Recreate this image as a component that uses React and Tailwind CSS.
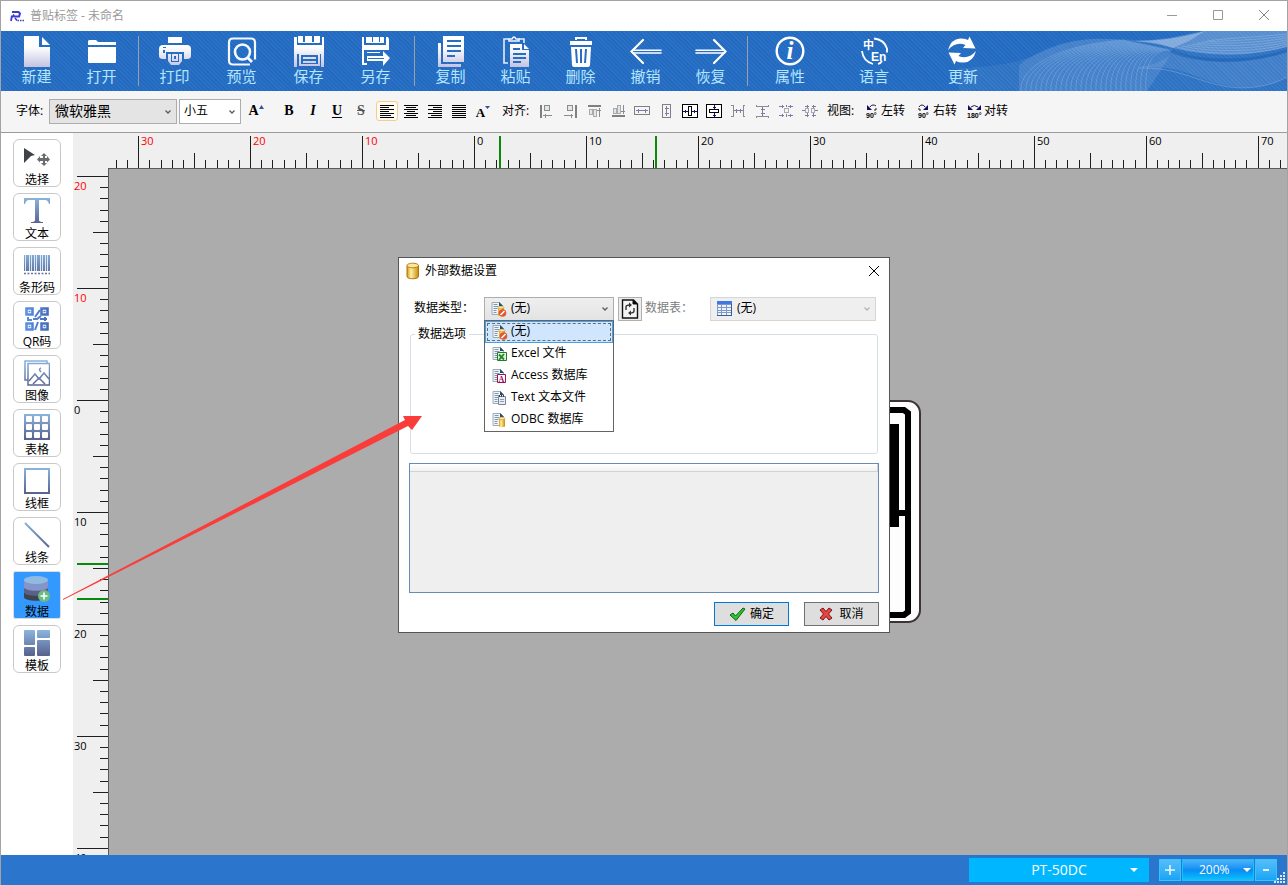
import { useState } from "react";
import clsx from "clsx";

const TICK = 11.195;

const toolGroups = [
  {
    items: [
      { label: "新建", icon: NewIcon, width: "w-[65px]" },
      { label: "打开", icon: OpenIcon, width: "w-[65px]" },
    ],
  },
  {
    divider: "ml-1 mr-0.5",
    items: [
      { label: "打印", icon: PrintIcon, width: "w-[67px]" },
      { label: "预览", icon: PreviewIcon, width: "w-[67px]" },
      { label: "保存", icon: SaveIcon, width: "w-[67px]" },
      { label: "另存", icon: SaveAsIcon, width: "w-[67px]" },
    ],
  },
  {
    divider: "ml-[5px] mr-[3px]",
    items: [
      { label: "复制", icon: CopyIcon, width: "w-[65px]" },
      { label: "粘贴", icon: PasteIcon, width: "w-[65px]" },
      { label: "删除", icon: DeleteIcon, width: "w-[65px]" },
      { label: "撤销", icon: UndoIcon, width: "w-[65px]" },
      { label: "恢复", icon: RedoIcon, width: "w-[65px]" },
    ],
  },
  {
    divider: "ml-1",
    items: [
      { label: "属性", icon: InfoIcon, width: "w-[84px]" },
      { label: "语言", icon: LanguageIcon, width: "w-[84px]" },
      { label: "更新", icon: UpdateIcon, width: "w-[94px]" },
    ],
  },
];

const sideTools = [
  { label: "选择", icon: SelectArt },
  { label: "文本", icon: TextArt },
  { label: "条形码", icon: BarcodeArt },
  { label: "QR码", icon: QrArt },
  { label: "图像", icon: ImageArt },
  { label: "表格", icon: TableArt },
  { label: "线框", icon: FrameArt },
  { label: "线条", icon: LineArt },
  { label: "数据", icon: DataArt },
  { label: "模板", icon: TemplateArt },
];

const dataTypes = [
  { label: "(无)", badge: "none" },
  { label: "Excel 文件", badge: "excel" },
  { label: "Access 数据库", badge: "access" },
  { label: "Text 文本文件", badge: "text" },
  { label: "ODBC 数据库", badge: "odbc" },
];

export default function App() {
  const [activeTool, setActiveTool] = useState("数据");

  return (
    <div className="relative flex h-screen flex-col overflow-hidden border-x border-t border-[#a3a3a3] bg-white font-['Open_Sans','Noto_Sans_CJK_SC',sans-serif] text-xs text-black">
      <Gradients />
      <TitleBar />
      <Toolbar />
      <FormatBar />

      <div className="flex min-h-0 flex-1">
        <nav className="flex w-[72px] shrink-0 flex-col gap-1.5 bg-white pt-1.5 pl-3">
          {sideTools.map(({ label, icon: Icon }) => (
            <button
              key={label}
              onClick={() => setActiveTool(label)}
              className={clsx(
                "flex h-12 w-12 shrink-0 flex-col items-center border bg-clip-padding pt-[3px] leading-4",
                activeTool === label ? "rounded-[2px] border-[#dcdcdc] bg-[#3399ff]" : "rounded-md border-[#c9c9c9] bg-white"
              )}
            >
              <Icon />
              <span className="mt-px h-4 whitespace-nowrap">{label}</span>
            </button>
          ))}
        </nav>

        <div className="flex min-w-0 flex-1 flex-col bg-[#efefef]">
          <TopRuler />
          <div className="flex min-h-0 flex-1">
            <LeftRuler />
            <main className="relative min-w-0 flex-1 overflow-hidden border-t border-l border-[#5a5a5a] bg-[#acacac]">
              <LabelCard />
            </main>
          </div>
        </div>
      </div>

      <StatusBar />

      <div className="pointer-events-none absolute inset-0 flex items-center justify-center pt-1">
        <DataDialog />
      </div>
      <Pointer />
    </div>
  );
}

function Gradients() {
  return (
    <svg className="absolute h-0 w-0" aria-hidden="true">
      <defs>
        <linearGradient id="sheen" gradientUnits="userSpaceOnUse" x1="0" y1="0" x2="0" y2="31">
          <stop offset="0.35" stopColor="#ffffff" />
          <stop offset="1" stopColor="#c3c3e2" />
        </linearGradient>
        <linearGradient id="steel" gradientUnits="userSpaceOnUse" x1="0" y1="0" x2="0" y2="26">
          <stop offset="0" stopColor="#8cb8e2" />
          <stop offset="1" stopColor="#5a6490" />
        </linearGradient>
        <linearGradient id="steelH" gradientUnits="userSpaceOnUse" x1="0" y1="0" x2="26" y2="0">
          <stop offset="0" stopColor="#5b94e6" />
          <stop offset="1" stopColor="#4568b4" />
        </linearGradient>
        <linearGradient id="gold" x1="0" y1="0" x2="1" y2="0">
          <stop offset="0" stopColor="#d99a10" />
          <stop offset="0.35" stopColor="#ffefa6" />
          <stop offset="1" stopColor="#c98a06" />
        </linearGradient>
      </defs>
    </svg>
  );
}

function TitleBar() {
  return (
    <header className="flex h-[30px] shrink-0 items-center bg-white pl-2 text-[#999]">
      <svg width="16" height="14" viewBox="0 0 16 14" fill="none" stroke="#3f3bd0">
        <path d="M3 3h6.500l1.500 1.500-1 3H5" strokeWidth="2" />
        <path d="M5 5.500L4 7.500H2.800L2 12" strokeWidth="1.800" />
        <path d="M6 9l2 2.500" strokeWidth="1.600" />
        <path d="M8.500 11.500h6.500" strokeWidth="1.600" strokeDasharray="1.500 1" />
      </svg>
      <h1 className="ml-[5px] flex-1 leading-5">普贴标签 - 未命名</h1>
      <button aria-label="最小化" className="flex h-full w-[46px] items-center justify-center">
        <svg width="12" height="12" viewBox="0 0 12 12" stroke="#999"><path d="M1 5.500h10" /></svg>
      </button>
      <button aria-label="最大化" className="flex h-full w-[46px] items-center justify-center">
        <svg width="12" height="12" viewBox="0 0 12 12" stroke="#999" fill="none"><path d="M1.500 .5h9v9h-9z" /></svg>
      </button>
      <button aria-label="关闭" className="flex h-full w-[46px] items-center justify-center">
        <svg width="12" height="12" viewBox="0 0 12 12" stroke="#888"><path d="M1 0l10 10M11 0L1 10" /></svg>
      </button>
    </header>
  );
}

function Toolbar() {
  return (
    <div className="relative flex h-[60px] shrink-0 overflow-hidden bg-[#2970c4] bg-[repeating-linear-gradient(45deg,#2369be_0px,#2369be_1px,#2a72c7_2px,#2a72c7_3px)] pl-[3px]">
      <Waves />
      {toolGroups.map((group, i) => (
        <div key={i} className="relative flex">
          {group.divider && <span className={clsx("mt-[5px] h-[50px] w-px bg-[#98a0a8]", group.divider)} />}
          {group.items.map(({ label, icon: Icon, width }) => (
            <button key={label} className={clsx("flex flex-col items-center pt-[5px]", width)}>
              <svg width="32" height="32" viewBox="0 0 32 32" fill="none">
                <Icon />
              </svg>
              <span className="text-[15px] leading-4 text-[#b4e6ff]">{label}</span>
            </button>
          ))}
        </div>
      ))}
    </div>
  );
}

function Waves() {
  const fan = Array.from({ length: 26 }, (_, i) => i);
  const rings = Array.from({ length: 7 }, (_, i) => i);
  return (
    <svg className="absolute top-0 right-0" width="328" height="60" viewBox="0 0 328 60" fill="none" aria-hidden="true">
      <path d="M0 37C60 35 70 26 100 14C140 2 175 12 200 8C225 6 235 0 245 0H328V60H0z" fill="#fff" opacity="0.06" />
      <path d="M60 60V34C92 10 130 4 170 10C190 14 205 17 214 19C205 35 195 50 188 60z" fill="#fff" opacity="0.1" />
      <path d="M160 9C200 12 225 4 245 0H328V16C290 26 250 26 214 17C195 12 180 10 160 9z" fill="#fff" opacity="0.2" />
      <path d="M170 37C215 33 230 43 250 50C280 60 305 58 328 46V20C290 34 250 36 214 20C208 30 190 36 170 37z" fill="#fff" opacity="0.09" />
      <path d="M175 10C200 10 222 7 246 0L230 10L214 17C200 12 190 11 175 10z" fill="#fff" opacity="0.25" />
      <path d="M180 37C215 36 230 47 260 54C285 60 310 56 328 46" stroke="#fff" opacity="0.2" />
      <path d="M212 20C240 32 290 32 328 20" stroke="#1b5dae" opacity="0.5" strokeWidth="3" />
      <g stroke="#cfe6ff" opacity="0.22">
        {fan.map((i) => (
          <path key={i} d={`M${62 + i * 5} 60C${60 + i * 5} ${38 - i / 4} ${95 + i * 4} ${14 + i / 5} ${165 + i * 1.8} ${9 + i * 0.4}`} />
        ))}
      </g>
      <g stroke="#e4f1ff" opacity="0.2">
        {rings.map((i) => (
          <path key={i} d={`M${218 + i * 5} ${16 - i}C${250 + i * 3} ${25 - i * 3} ${300} ${24 - i * 3} 328 ${15 - i * 2}`} />
        ))}
      </g>
    </svg>
  );
}

function NewIcon() {
  return (
    <g fill="url(#sheen)">
      <path d="M3 0h15v11h11v20H3z" />
      <path d="M21 1l8 8h-8z" />
    </g>
  );
}

function OpenIcon() {
  return (
    <g fill="#fff">
      <path d="M3 4h7l2 2h18v3H2V5z" />
      <path d="M2 11h28v15q0 1-1 1H3q-1 0-1-1z" />
    </g>
  );
}

function PrintIcon() {
  return (
    <g fill="url(#sheen)">
      <path d="M9 1h14v6H9z" />
      <path fillRule="evenodd" d="M4 9h24q4 0 4 4v7q0 3-4 3h-3v-7H7v7H4q-4 0-4-3v-7q0-4 4-4zM4 14v3h2v-3zM4 11v1h3v-1z" />
      <path fillRule="evenodd" d="M9 18h14v7l-3 4h-8l-3-4zM12 18v8h8v-8z" />
      <path fillRule="evenodd" d="M13 18h6v7h-6zM15 20v3h2v-3z" />
    </g>
  );
}

function PreviewIcon() {
  return (
    <g stroke="#f4f8ff" strokeWidth="2.200">
      <path d="M24 28.500H7q-4 0-4-4V6.500q0-4 4-4h18q4 0 4 4v17" />
      <circle cx="16.500" cy="16" r="7.500" strokeWidth="2.600" />
      <path d="M21 21l5 5" strokeWidth="2.800" />
    </g>
  );
}

function SaveIcon() {
  return (
    <g fill="url(#sheen)">
      <path d="M1 1h2v12h26V1h2v30h-3V18H4v13H1z" />
      <path d="M1 9h30v5H1zM5 0h22v6q0 1-1 1H6q-1 0-1-1zM1 1h3v9H1z" />
      <path d="M10 0h2v6h-2zM19 0h2v6h-2z" fill="#276ec2" />
      <path fillRule="evenodd" d="M6 17h21v13H6zM8 19v9h17v-9z" />
      <path d="M10 21h13v2H10zM10 25h13v2H10z" />
    </g>
  );
}

function SaveAsIcon() {
  return (
    <g fill="#fff">
      <path d="M2 1h2v26h3v2H2zM6 1h18v6H6zM26 1h2l1 2v11H4V9h22z" />
      <path d="M12 1h1v5h-1zM19 1h1v5h-1z" fill="#276ec2" />
      <path d="M7 16h13v1H7zM7 20h16v-5l7 7-7 8v-5H7z" />
      <path d="M8 22h16v1H8z" fill="#276ec2" />
    </g>
  );
}

function CopyIcon() {
  return (
    <g fill="url(#sheen)">
      <path d="M3 7h3v21h20v3H3z" />
      <path fillRule="evenodd" d="M8 0h21v26H8zM12 4v2h14V4zM12 9v2h14V9zM12 14v2h14v-2zM12 19v2h8v-2z" />
    </g>
  );
}

function PasteIcon() {
  return (
    <g>
      <path d="M8 27H4V3h5M19 3h5v4" stroke="#e4edfb" strokeWidth="1.600" />
      <path d="M9 5V3h3q2-4 4 0h3v2z" stroke="#f3f7ff" strokeWidth="1.500" />
      <path fill="url(#sheen)" fillRule="evenodd" d="M10 8h12v6h7v17H10zM13 12v2h7v-2zM13 17v2h13v-2zM13 21v2h13v-2zM13 25v2h8v-2z" />
      <path fill="#fff" d="M24 8l5 5h-5z" />
    </g>
  );
}

function DeleteIcon() {
  return (
    <g>
      <path d="M11 4V2h10v2" stroke="#fff" strokeWidth="2" />
      <path d="M5 5h22v4H5z" fill="#fff" />
      <path d="M6 11h20l-1 18q0 2-2 2H9q-2 0-2-2z" fill="#fff" />
      <path d="M10 13h2l1 14h-2zM15 13h2v14h-2zM20 13h2l-1 14h-2z" fill="#286fc3" />
    </g>
  );
}

function UndoIcon() {
  return (
    <g stroke="#fff" strokeLinecap="round">
      <path d="M13 4L1.500 15.500L13 27" strokeWidth="2.200" />
      <path d="M3 14.300h28M3 17h28" strokeWidth="1.600" />
    </g>
  );
}

function RedoIcon() {
  return (
    <g stroke="#fff" strokeLinecap="round">
      <path d="M19 4l11.500 11.500L19 27" strokeWidth="2.200" />
      <path d="M29 14.300H1M29 17H1" strokeWidth="1.600" />
    </g>
  );
}

function InfoIcon() {
  return (
    <g>
      <circle cx="16" cy="15" r="13.300" stroke="#fff" strokeWidth="2.400" />
      <text x="16" y="23" textAnchor="middle" fill="#fff" fontSize="25" fontStyle="italic" fontWeight="700" fontFamily="Liberation Serif, serif">i</text>
    </g>
  );
}

function LanguageIcon() {
  return (
    <g>
      <path d="M16 2.500q10 1 13 10v4M4 15q1 10 11 13M24 25q-1 2-4 3" stroke="#fff" strokeWidth="1.800" />
      <text x="5" y="13" fill="#fff" fontSize="11" fontWeight="700" fontFamily="Noto Sans CJK SC, sans-serif">中</text>
      <text x="13" y="25" fill="#fff" fontSize="12" fontWeight="700" fontFamily="Liberation Sans, sans-serif">En</text>
    </g>
  );
}

function UpdateIcon() {
  const arrow = "M1 14Q4 3 13 2.500Q18 2 21 4L22.500 .5L28.500 12.500L16 12L18.500 9Q9 5 1 14z";
  return (
    <g fill="#fff">
      <path d={arrow} />
      <path d={arrow} transform="rotate(180 15 14.500)" />
    </g>
  );
}

function Chevron({ color = "#5b5b5b", className }) {
  return (
    <svg className={clsx("pointer-events-none absolute", className)} width="8" height="6" viewBox="0 0 8 6" fill="none" stroke={color} strokeWidth="1.300">
      <path d="M1.500 1.500L4 4l2.500-2.500" />
    </svg>
  );
}

function IconButton({ label, active, children }) {
  return (
    <button
      aria-label={label}
      aria-pressed={active}
      className={clsx(
        "mx-px flex h-5 w-[22px] items-center justify-center rounded-[3px]",
        active && "border border-[#f5ce85] bg-[#fcfaf3]"
      )}
    >
      {children}
    </button>
  );
}

function TextIcon({ children, className }) {
  return <span className={clsx("font-['Liberation_Serif',serif] text-sm leading-4 font-bold", className)}>{children}</span>;
}

function Grid16({ children, stroke = "#8c8c8c" }) {
  return (
    <svg className="shrink-0" width="16" height="16" viewBox="0 0 16 16" fill="none" stroke={stroke} shapeRendering="crispEdges">
      {children}
    </svg>
  );
}

function Lines({ rows }) {
  return (
    <Grid16 stroke="#000">
      {rows.map(([x, w], i) => (
        <path key={i} d={`M${x} ${2.5 + i * 2}h${w}`} />
      ))}
    </Grid16>
  );
}

const L = [[1, 14], [1, 9], [1, 14], [1, 9], [1, 14], [1, 11], [1, 14]];
const C = [[1, 14], [3, 10], [1, 14], [4, 8], [1, 14], [3, 10], [1, 14]];
const R = [[1, 14], [6, 9], [1, 14], [6, 9], [1, 14], [4, 11], [1, 14]];
const J = [[1, 14], [1, 14], [1, 14], [1, 14], [1, 14], [1, 14], [1, 14]];

function FormatBar() {
  return (
    <div className="flex h-[42px] shrink-0 items-center border-b border-[#9b9b9b] bg-[#f5f5f5] pb-px pl-[15px] leading-4 whitespace-nowrap">
      <label htmlFor="font" className="w-[33px]">字体:</label>
      <div className="relative">
        <select id="font" className="h-[25px] w-32 appearance-none border border-[#adadad] bg-[#e4e4e4] pl-[5px] text-sm leading-5">
          <option>微软雅黑</option>
        </select>
        <Chevron className="top-[10px] right-[5px]" />
      </div>
      <div className="relative ml-0.5">
        <select aria-label="字号" className="h-[25px] w-[62px] appearance-none border border-[#adadad] bg-white pl-1 text-xs">
          <option>小五</option>
        </select>
        <Chevron className="top-[10px] right-[5px]" />
      </div>
      <div className="ml-[3px] flex">
        <IconButton label="增大字号">
          <TextIcon className="text-base">A</TextIcon>
          <svg className="mb-2" width="5" height="4" viewBox="0 0 5 4"><path d="M2.500 0L5 4H0z" fill="#3a55a0" /></svg>
        </IconButton>
      </div>
      <div className="ml-[9px] flex">
        <IconButton label="加粗"><TextIcon>B</TextIcon></IconButton>
        <IconButton label="斜体"><TextIcon className="italic">I</TextIcon></IconButton>
        <IconButton label="下划线"><TextIcon className="underline underline-offset-2">U</TextIcon></IconButton>
        <IconButton label="删除线"><TextIcon className="text-[#555] line-through">S</TextIcon></IconButton>
      </div>
      <div className="ml-0.5 flex">
        <IconButton label="左对齐" active><Lines rows={L} /></IconButton>
        <IconButton label="居中"><Lines rows={C} /></IconButton>
        <IconButton label="右对齐"><Lines rows={R} /></IconButton>
        <IconButton label="两端对齐"><Lines rows={J} /></IconButton>
        <IconButton label="减小字号">
          <TextIcon className="mt-1 text-[13px]">A</TextIcon>
          <svg className="mb-2" width="5" height="3" viewBox="0 0 5 3"><path d="M0 0h5L2.500 3z" fill="#3a4f90" /></svg>
        </IconButton>
      </div>
      <span className="ml-[7px] w-8">对齐:</span>
      <div className="flex">
        <IconButton label="左边对齐">
          <Grid16>
            <path d="M2.500 2v13" strokeWidth="2" stroke="#808080" />
            <path d="M6.500 2.500h5v5h-5z" fill="#dfe7ee" />
            <path d="M5 12.500h9M7.500 10.500v4" />
          </Grid16>
        </IconButton>
        <IconButton label="右边对齐">
          <Grid16>
            <path d="M14 2v13" strokeWidth="2" stroke="#808080" />
            <path d="M5.500 2.500h5v5h-5z" fill="#dfe7ee" />
            <path d="M2 12.500h9M9.500 10.500v4" />
          </Grid16>
        </IconButton>
        <IconButton label="顶端对齐">
          <Grid16>
            <path d="M2 3h13" strokeWidth="2" stroke="#808080" />
            <path d="M3.500 6.500h3v5h-3zM7.500 6.500h3v7h-3z" fill="#dfe7ee" stroke="#aaa" />
            <path d="M13.500 5v9M11 7.500h4" />
          </Grid16>
        </IconButton>
        <IconButton label="底端对齐">
          <Grid16>
            <path d="M2 13h13" strokeWidth="2" stroke="#808080" />
            <path d="M3.500 5.500h3v5h-3zM7.500 2.500h3v8h-3z" fill="#dfe7ee" stroke="#aaa" />
            <path d="M13.500 2v9M11 8.500h4" />
          </Grid16>
        </IconButton>
        <IconButton label="等宽">
          <Grid16 stroke="#808080">
            <path d="M.5 3.500h15v8H.5z" />
            <path d="M2 7.500h12M4.500 5.500v4M11.500 5.500v4" stroke="#7f7ba8" />
          </Grid16>
        </IconButton>
        <IconButton label="等高">
          <Grid16 stroke="#808080">
            <path d="M4.500 1.500h8v13h-8z" />
            <path d="M8.500 3v10M6.500 5.500h4M6.500 10.500h4" stroke="#7f7ba8" />
          </Grid16>
        </IconButton>
        <IconButton label="水平居中">
          <Grid16 stroke="#000">
            <path d="M.5 1.500h15v13H.5zM6.500 3.500h3v9h-3z" fill="#fff" />
            <path d="M1 8.500h5M10 8.500h5M3.500 7v3M12.500 7v3" stroke="#111166" />
          </Grid16>
        </IconButton>
        <IconButton label="垂直居中">
          <Grid16 stroke="#000">
            <path d="M.5 1.500h15v13H.5zM3.500 6.500h9v3h-9z" fill="#fff" />
            <path d="M8.500 2v4M8.500 10v4M7 4.500h3M7 12.500h3" stroke="#111166" />
          </Grid16>
        </IconButton>
        <IconButton label="水平等距">
          <Grid16>
            <path d="M1 2.500h2v11H1M15 2.500h-2v11h2" />
            <path d="M4 7.500h9M6.500 5.500v4M10.500 5.500v4" stroke="#7f7ba8" />
          </Grid16>
        </IconButton>
        <IconButton label="垂直等距">
          <Grid16>
            <path d="M2 2v1.500h12V2M2 15v-1.500h12V15" />
            <path d="M8.500 4v9M6.500 6.500h4M6.500 10.500h4" stroke="#7f7ba8" />
          </Grid16>
        </IconButton>
        <IconButton label="组合">
          <Grid16>
            <path d="M6.500 5.500h4v4h-4z" stroke="#aaa" />
            <path d="M1 3.500h5M10 3.500h5M1 12.500h5M10 12.500h5M4.500 2v3M12.500 2v3M4.500 11v3M12.500 11v3M8.500 2v2M8.500 11v3" stroke="#7f7ba8" />
          </Grid16>
        </IconButton>
        <IconButton label="取消组合">
          <Grid16>
            <path d="M3.500 5.500h3v4h-3zM9.500 5.500h3v4h-3z" stroke="#aaa" />
            <path d="M0 7.500h3M13 7.500h3M3 3.500h4M10 3.500h4M3 12.500h4M10 12.500h4M5.500 2v3M11.500 2v3M5.500 10v4M11.500 10v4" stroke="#7f7ba8" />
          </Grid16>
        </IconButton>
      </div>
      <span className="ml-[5px] w-[37px]">视图:</span>
      <button className="flex w-[52px] items-center gap-px"><RotateIcon deg="90°" dir="left" />左转</button>
      <button className="flex w-[51px] items-center gap-px"><RotateIcon deg="90°" dir="right" />右转</button>
      <button className="flex items-center gap-px"><RotateIcon deg="180°" dir="both" />对转</button>
    </div>
  );
}

function RotateIcon({ deg, dir }) {
  return (
    <svg className="shrink-0" width="16" height="16" viewBox="0 0 16 16" fill="none">
      {dir === "left" && (
        <>
          <path d="M3 2v5h5z" fill="#0c0c60" />
          <path d="M6 4q1-2 3-2t3 1M12 5v2h-2" stroke="#222" />
        </>
      )}
      {dir === "right" && (
        <>
          <path d="M12 2v5H7z" fill="#0c0c60" />
          <path d="M9 4Q8 2 6 2T3 4M3 5v2h2" stroke="#222" />
        </>
      )}
      {dir === "both" && (
        <>
          <path d="M1 2v5h5zM14 2v5H9z" fill="#0c0c60" />
          <path d="M4 4q3-3 7 0" stroke="#222" />
        </>
      )}
      <text x={dir === "both" ? 0 : 2} y="15" fontSize="7" fontWeight="700" fill="#000" fontFamily="Liberation Sans, sans-serif">{deg}</text>
    </svg>
  );
}

function TopRuler() {
  const ticks = Array.from({ length: 105 }, (_, i) => i - 32);
  return (
    <svg className="block h-[35px] w-full shrink-0" fontSize="11" shapeRendering="crispEdges">
      {ticks.map((i) => {
        const x = Math.round(401 + i * TICK);
        const top = i % 10 === 0 ? 3 : i % 5 === 0 ? 20 : 27;
        return (
          <g key={i}>
            <rect x={x} y={top} width="1" height={35 - top} fill="#1e1e1e" />
            {i % 10 === 0 && (
              <text x={x + 3} y="12" fill={i < 0 ? "#ff0000" : "#000"}>{Math.abs(i)}</text>
            )}
          </g>
        );
      })}
      <rect x="426" y="3" width="2" height="32" fill="#0a8a0a" />
      <rect x="582" y="3" width="2" height="32" fill="#0a8a0a" />
    </svg>
  );
}

function LeftRuler() {
  const ticks = Array.from({ length: 61 }, (_, i) => i - 20);
  return (
    <svg className="block h-full w-[35px] shrink-0" fontSize="11" shapeRendering="crispEdges">
      {ticks.map((i) => {
        const y = Math.round(232 + i * TICK);
        const left = i % 10 === 0 ? 4 : i % 5 === 0 ? 20 : 27;
        return (
          <g key={i}>
            <rect x={left} y={y} width={35 - left} height="1" fill="#1e1e1e" />
            {i % 10 === 0 && (
              <text x="1" y={y + 14} fill={i < 0 ? "#ff0000" : "#000"}>{Math.abs(i)}</text>
            )}
          </g>
        );
      })}
      <rect x="4" y="395" width="31" height="2" fill="#0a8a0a" />
      <rect x="4" y="430" width="31" height="2" fill="#0a8a0a" />
    </svg>
  );
}

function LabelCard() {
  return (
    <svg className="absolute top-[231px] left-[364px]" width="448" height="224" viewBox="0 0 448 224" fill="none">
      <rect x="1" y="1" width="446" height="221" rx="12" fill="#fdfdfd" stroke="#3c3434" strokeWidth="2" />
      <path d="M11 10h420l4 3v199l-4 3H11z" stroke="#000" strokeWidth="6" />
      <path d="M300 24h126v103H300zM425 110h10v6h-10z" fill="#000" />
    </svg>
  );
}

function StatusBar() {
  return (
    <footer className="relative flex h-[30px] shrink-0 items-center justify-end bg-[#2b75cc] pr-[10px] text-white">
      <div className="relative mr-[10px] w-[180px]">
        <select aria-label="打印机" className="h-6 w-full appearance-none bg-[#00b7ff] text-center text-sm leading-5 [text-align-last:center]">
          <option>PT-50DC</option>
        </select>
        <svg className="pointer-events-none absolute top-[10px] right-[11px]" width="8" height="4" viewBox="0 0 8 4"><path d="M0 0h8L4 4z" fill="#fff" /></svg>
      </div>
      <button aria-label="放大" className="flex h-[22px] w-[22px] items-center justify-center border border-[#2ccbff] bg-linear-to-b from-[#54bdf8] to-[#12a5f6]">
        <svg width="10" height="10" viewBox="0 0 10 10" stroke="#e4f6ff" strokeWidth="1.600"><path d="M0 5h10M5 0v10" /></svg>
      </button>
      <div className="relative ml-px">
        <select aria-label="缩放" className="h-[22px] w-[72px] appearance-none border border-[#1cc0ff] bg-linear-to-b from-[#4ab4f8] via-[#0a8cf4] to-[#13c0fb] pl-4 text-xs leading-4">
          <option>200%</option>
        </select>
        <svg className="pointer-events-none absolute top-[9px] right-[3px]" width="8" height="4" viewBox="0 0 8 4"><path d="M0 0h8L4 4z" fill="#fff" /></svg>
      </div>
      <button aria-label="缩小" className="ml-px flex h-[22px] w-[22px] items-center justify-center border border-[#2ccbff] bg-linear-to-b from-[#54bdf8] to-[#12a5f6]">
        <svg width="6" height="2" viewBox="0 0 6 2"><path d="M0 0h6v2H0z" fill="#d8f1ff" /></svg>
      </button>
      <svg className="absolute right-px bottom-px" width="12" height="12" viewBox="0 0 12 12" fill="#dbe9f8" shapeRendering="crispEdges">
        <path d="M9 0h2v2H9zM6 3h2v2H6zM9 3h2v2H9zM3 6h2v2H3zM6 6h2v2H6zM9 6h2v2H9zM0 9h2v2H0zM3 9h2v2H3zM6 9h2v2H6zM9 9h2v2H9z" />
      </svg>
    </footer>
  );
}

function DataDialog() {
  return (
    <section
      role="dialog"
      aria-labelledby="dialog-title"
      className="pointer-events-auto flex h-[376px] w-[492px] flex-col border border-[#555] bg-white px-2.5 leading-4 whitespace-nowrap"
    >
      <div className="-mx-px flex h-[26px] items-center">
        <svg className="-ml-0.5" width="14" height="18" viewBox="0 0 14 18">
          <path d="M1 3.500v11c0 3 11.500 3 11.500 0v-11z" fill="url(#gold)" stroke="#a87410" />
          <ellipse cx="6.750" cy="3.500" rx="5.750" ry="2.300" fill="#fbe79a" stroke="#b98518" />
        </svg>
        <h2 id="dialog-title" className="ml-[5px] flex-1">外部数据设置</h2>
        <button aria-label="关闭">
          <svg width="12" height="12" viewBox="0 0 12 12" stroke="#000"><path d="M1 1l10 10M11 1L1 11" /></svg>
        </button>
      </div>

      <div className="mt-[13px] flex h-6 items-center pl-[5px]">
        <label htmlFor="type" className="w-[70px] pb-0.5">数据类型：</label>
        <div className="relative w-[130px]">
          <select id="type" className="h-6 w-full appearance-none border border-[#adadad] bg-linear-to-b from-[#efefef] to-[#e3e3e3] pb-0.5 pl-[26px] text-xs leading-4">
            {dataTypes.map((t) => <option key={t.label}>{t.label}</option>)}
          </select>
          <SourceIcon badge="none" className="pointer-events-none absolute top-1 left-[7px]" />
          <Chevron className="top-[9px] right-[5px]" />
          <DataTypeMenu />
        </div>
        <button aria-label="刷新" className="ml-1 flex h-6 w-6 items-center justify-center border border-[#b0b0b0] bg-[#ececec]">
          <svg width="18" height="20" viewBox="0 0 18 20" fill="none" stroke="#111">
            <path d="M1.500 1h11l4 4v14h-15z" strokeWidth="1.400" fill="#f4f4f4" />
            <path d="M12 1v4h4z" fill="#000" />
            <path d="M5 11V8q0-2 4-2M13 9v3q0 2-4 2" stroke="#333" strokeWidth="1.400" />
            <path d="M8 3.500L11 6 8 8.500zM10 11.500L7 14l3 2.500z" fill="#333" stroke="none" />
          </svg>
        </button>
        <label htmlFor="table" className="ml-[3px] w-[65px] pb-0.5 text-[#808080]">数据表：</label>
        <div className="relative min-w-0 flex-1 pr-[3px]">
          <select id="table" disabled className="h-6 w-full appearance-none border border-[#d6d6d6] bg-[#efefef] pb-0.5 pl-[26px] text-xs leading-4 text-black opacity-100">
            <option>(无)</option>
          </select>
          <svg className="pointer-events-none absolute top-1 left-[7px]" width="16" height="16" viewBox="0 0 16 16" shapeRendering="crispEdges">
            <path d="M0 0h15v15H0z" fill="#7f9ac8" />
            <path d="M0 0h15v3H0z" fill="#3f78e0" />
            <path d="M14 3h1v12H0v-1h14z" fill="#3c5f90" />
            <path d="M1 4h3v2H1zM5 4h4v2H5zM10 4h4v2h-4zM1 7h3v2H1zM5 7h4v2H5zM10 7h4v2h-4zM1 10h3v1H1zM5 10h4v1H5zM10 10h4v1h-4zM1 12h3v2H1zM5 12h4v2H5zM10 12h4v2h-4z" fill="#eef3fb" />
          </svg>
          <Chevron color="#b5b5b5" className="top-[9px] right-[8px]" />
        </div>
      </div>

      <fieldset className="mt-[5px] mr-px ml-px h-32 min-w-0 shrink-0 rounded-[3px] border border-[#d5dfe5] pl-1">
        <legend className="px-[3px]">数据选项</legend>
      </fieldset>

      <div className="mt-[9px] h-[130px] shrink-0 border border-[#6a8ab4] bg-[#efefef]">
        <div className="h-2 border-r border-b border-[#d3d3d3] bg-linear-to-b from-white to-[#f0f1f3]" />
      </div>

      <div className="mt-[9px] flex gap-[15px] self-end">
        <button className="flex h-6 w-[75px] items-center justify-center gap-1 border border-[#0078d7] bg-[#dedede]">
          <svg width="17" height="14" viewBox="0 0 17 14"><path d="M1 8l3-2 2.500 3L14 1l2 1-9 11.500z" fill="#2fc52c" stroke="#125f18" /></svg>
          确定
        </button>
        <button className="flex h-6 w-[75px] items-center justify-center gap-1.5 border border-[#707070] bg-[#dedede]">
          <svg width="14" height="14" viewBox="0 0 14 14"><path d="M1 3l3-2 3 3.500L10 1l3 2-3.500 4L13 11l-3 2-3-3.500L4 13l-3-2 3.500-4z" fill="#e84440" stroke="#7a1515" /></svg>
          取消
        </button>
      </div>
    </section>
  );
}

function DataTypeMenu() {
  const [selected, setSelected] = useState("none");
  return (
    <ul role="listbox" aria-label="数据类型" className="absolute top-[23px] left-0 z-10 w-[130px] border border-[#646464] bg-white">
      {dataTypes.map(({ label, badge }) => (
        <li
          key={badge}
          role="option"
          aria-selected={selected === badge}
          onClick={() => setSelected(badge)}
          className={clsx(
            "relative flex h-[22px] items-center gap-[3px] pb-0.5 pl-[7px]",
            selected === badge && "bg-[#cfe6fc] outline outline-[#4aa0e8] -outline-offset-1"
          )}
        >
          {selected === badge && <span className="absolute inset-0.5 border border-dashed border-[#5e6f80]" />}
          <SourceIcon badge={badge} className="relative top-px shrink-0" />
          <span>{label}</span>
        </li>
      ))}
    </ul>
  );
}

function SourceIcon({ badge, className }) {
  return (
    <svg className={className} width="16" height="16" viewBox="0 0 16 16" fill="none">
      <path d="M1 1.500h7.500l3 3V13.500H1z" fill="#f1f5f9" stroke="#9daab8" />
      <path d="M8 1l4 4H8z" fill="#1f4f68" />
      <path d="M2.500 3.500h4M2.500 5.500h5M2.500 7.500h4M2.500 9.500h3M2.500 11.500h3" stroke="#7f96b0" />
      {(badge === "none" || badge === "odbc") && (
        <>
          <path d="M7 6.500v7.500c0 1.600 6 1.600 6 0V6.500z" fill="url(#gold)" />
          <ellipse cx="10" cy="6.500" rx="3" ry="1.300" fill="#fbe79a" stroke="#c8922c" strokeWidth=".6" />
        </>
      )}
      {badge === "none" && (
        <>
          <circle cx="11.500" cy="12" r="3.800" fill="#e2572b" />
          <path d="M9.500 14l4-4" stroke="#fff" strokeWidth="1.600" />
        </>
      )}
      {badge === "excel" && (
        <>
          <path d="M5.500 6.500h9v8h-9z" fill="#dff3dd" stroke="#27792b" />
          <path d="M7 8.500l5 5M12 8l-5 6" stroke="#1d8a27" strokeWidth="1.800" />
        </>
      )}
      {badge === "access" && (
        <>
          <path d="M5.500 6.500h8v8h-8z" fill="#fff" stroke="#9c1158" />
          <text x="9.500" y="13.500" textAnchor="middle" fontSize="8" fontWeight="700" fill="#9c1158" fontFamily="Liberation Serif, serif">A</text>
        </>
      )}
      {badge === "text" && (
        <>
          <path d="M6.500 6.500h7v8h-7z" fill="#e8edf5" stroke="#7c8492" />
          <path d="M7.500 5v2M9.500 5v2M11.500 5v2" stroke="#444" />
          <path d="M8 9.500h4M8 11.500h4" stroke="#8d9dbd" />
        </>
      )}
    </svg>
  );
}

function Pointer() {
  return (
    <svg className="pointer-events-none absolute top-[414px] left-[61px]" width="362" height="188" viewBox="0 0 362 188">
      <path d="M1 184L343 5L341 1L360 1L350 15L346 11L1 185z" fill="#fa3c3a" />
    </svg>
  );
}

function Art({ children }) {
  return (
    <svg className="shrink-0" width="26" height="28" viewBox="0 0 26 28" fill="none">
      {children}
    </svg>
  );
}

function SelectArt() {
  return (
    <Art>
      <path d="M0 5l11 7-4 1-7 7z" fill="#3f4246" />
      <path d="M20 10l3 3h-2v2h2v-2l3 3.500-3 3V18h-2v2h2l-3 3-3-3h2v-2h-3v1.500l-3-3 3-3.500v2h3v-2h-2z" fill="#6a6d70" />
    </Art>
  );
}

function TextArt() {
  return (
    <Art>
      <path d="M0 1h26v6h-1q-1-4-4-4h-6v20q0 2 4 2v1H7v-1q4 0 4-2V3H5Q2 3 1 7H0z" fill="url(#steel)" />
    </Art>
  );
}

function BarcodeArt() {
  const bars = [[0, 1], [2, 3], [6, 1], [8, 2], [11, 1], [13, 3], [17, 1], [19, 2], [22, 1], [24, 2]];
  return (
    <Art>
      <path d="M0 4h26v16H0z" fill="#dce9f6" />
      {bars.map(([x, w]) => (
        <rect key={x} x={x} y="4" width={w} height="16" fill="url(#steel)" />
      ))}
      <path d="M0 22.500h26" stroke="#6a7499" strokeWidth="1.500" strokeDasharray="2 1.500" />
    </Art>
  );
}

function QrArt() {
  return (
    <Art>
      <g stroke="url(#steelH)" strokeWidth="2.600">
        <path d="M2.500 3.500h6v6h-6zM17.500 3.500h6v6h-6zM2.500 18.500h6v6h-6zM17.500 18.500h6v6h-6z" />
        <path d="M4.500 6.500h2M19.500 6.500h2M4.500 21.500h2M19.500 21.500h2" strokeWidth="1.500" />
        <path d="M11 12l5-7M9 14h4l4-3M14 17l-3 8M16 14h7M4 12v3h4M21 12v4" strokeWidth="2" />
      </g>
    </Art>
  );
}

function ImageArt() {
  return (
    <Art>
      <g stroke="url(#steel)" strokeWidth="1.500">
        <path d="M4 21H1V2h22v2" />
        <path d="M4 4.500h21.500v21.500H4z" fill="#fff" />
        <path d="M5 22l6-7 4 5 5-6 5 6M9 25l6-6 6 6" />
        <path d="M17 9q-3 1 0 4" />
      </g>
    </Art>
  );
}

function TableArt() {
  const cells = [3, 11, 19];
  return (
    <Art>
      <path d="M0 1h26v26H0z" fill="url(#steel)" />
      {cells.map((y) => cells.map((x) => (
        <rect key={`${x}-${y}`} x={x - 1} y={y} width="6" height="6" rx="1" fill="#fff" />
      )))}
    </Art>
  );
}

function FrameArt() {
  return (
    <Art>
      <path d="M1 2h24v24H1z" stroke="url(#steel)" strokeWidth="2" />
    </Art>
  );
}

function LineArt() {
  return (
    <Art>
      <path d="M1 2l24 24" stroke="url(#steel)" strokeWidth="2" />
    </Art>
  );
}

function DataArt() {
  return (
    <Art>
      <path d="M0 17v5c0 5 24 5 24 0v-5z" fill="#3c4450" />
      <path d="M0 11v6c0 5 24 5 24 0v-6z" fill="#5a6186" />
      <path d="M0 5v7c0 5 24 5 24 0V5z" fill="#8694cc" />
      <ellipse cx="12" cy="5" rx="12" ry="4" fill="#8fbbe2" />
      <circle cx="20" cy="21" r="6" fill="#6dbb84" />
      <path d="M20 17.500v7M16.500 21h7" stroke="#fff" strokeWidth="1.600" />
    </Art>
  );
}

function TemplateArt() {
  return (
    <Art>
      <g fill="url(#steel)">
        <rect x="0" y="1" width="11" height="15" rx="1" />
        <rect x="13" y="1" width="13" height="8" rx="1" />
        <rect x="0" y="18" width="11" height="9" rx="1" />
        <rect x="13" y="11" width="13" height="16" rx="1" />
      </g>
    </Art>
  );
}
